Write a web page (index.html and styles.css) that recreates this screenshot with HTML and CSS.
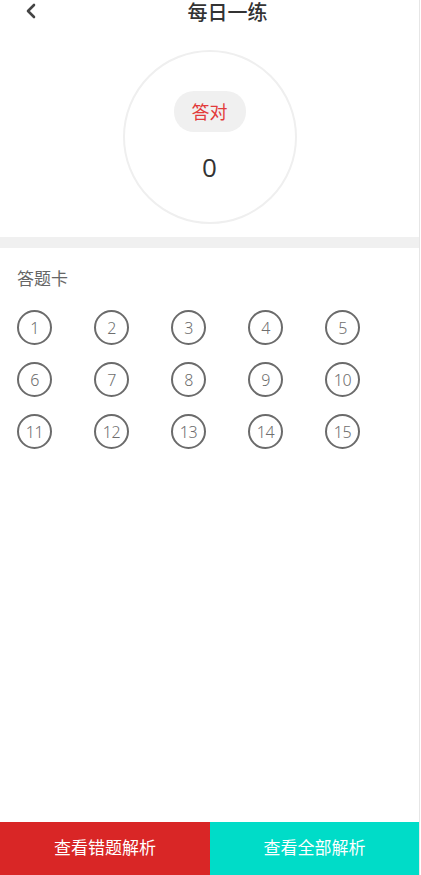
FILE: index.html
```html
<!DOCTYPE html>
<html lang="zh">
<head>
<meta charset="utf-8">
<link rel="stylesheet" href="styles.css">
</head>
<body>
<div class="page">
  <header class="topbar">
    <svg class="back" width="12" height="16" viewBox="0 0 12 16"><path d="M9 2 L3 8 L9 14" fill="none" stroke="#444" stroke-width="2.6" stroke-linecap="round" stroke-linejoin="round"/></svg>
    <h1 class="title">每日一练</h1>
  </header>
  <section class="score">
    <div class="ring">
      <span class="pill">答对</span>
      <span class="count">0</span>
    </div>
  </section>
  <div class="divider"></div>
  <section class="card">
    <h2 class="card-title">答题卡</h2>
    <div class="grid">
      <span class="num">1</span><span class="num">2</span><span class="num">3</span><span class="num">4</span><span class="num">5</span>
      <span class="num">6</span><span class="num">7</span><span class="num">8</span><span class="num">9</span><span class="num">10</span>
      <span class="num">11</span><span class="num">12</span><span class="num">13</span><span class="num">14</span><span class="num">15</span>
    </div>
  </section>
  <footer class="actions">
    <button class="btn btn-wrong">查看错题解析</button>
    <button class="btn btn-all">查看全部解析</button>
  </footer>
</div>
</body>
</html>
```

FILE: styles.css
```css
html, body {
  margin: 0;
  padding: 0;
  background: #fff;
}
body {
  font-family: "Noto Sans CJK SC", "Noto Sans", sans-serif;
}
.page {
  width: 419px;
  height: 875px;
  border-right: 1px solid #e6e6e6;
  display: flex;
  flex-direction: column;
  background: #fff;
}
.topbar {
  height: 24px;
  position: relative;
  display: flex;
  justify-content: center;
}
.back {
  position: absolute;
  left: 25px;
  top: 3px;
}
.title {
  margin: 0 0 0 36px;
  font-size: 20px;
  font-weight: 500;
  color: #333;
  line-height: 23px;
}
.score {
  height: 213px;
  display: flex;
  justify-content: center;
  padding-top: 26px;
  box-sizing: border-box;
}
.ring {
  width: 174px;
  height: 174px;
  box-sizing: border-box;
  border: 2px solid #efefef;
  border-radius: 50%;
  display: flex;
  flex-direction: column;
  align-items: center;
  padding-top: 39px;
}
.pill {
  width: 72px;
  height: 41px;
  border-radius: 20px;
  background: #f0f0f0;
  color: #e23a3a;
  font-size: 18px;
  line-height: 41px;
  text-align: center;
}
.count {
  margin-top: 20px;
  font-size: 26px;
  line-height: 30px;
  color: #333;
  font-family: "Open Sans", "Noto Sans", sans-serif;
}
.divider {
  height: 11px;
  background: #f0f0f0;
}
.card {
  flex: 1;
  padding: 17px 0 0 17px;
}
.card-title {
  margin: 0;
  font-size: 17px;
  font-weight: 400;
  color: #666;
  line-height: 26px;
}
.grid {
  margin-top: 19px;
  display: grid;
  grid-template-columns: repeat(5, 35px);
  column-gap: 42px;
  row-gap: 17px;
}
.num {
  width: 35px;
  height: 35px;
  box-sizing: border-box;
  border: 2px solid #6b6b6b;
  border-radius: 50%;
  display: flex;
  align-items: center;
  justify-content: center;
  font-family: "Noto Sans", sans-serif;
  font-size: 16px;
  font-weight: 300;
  color: #6e6e6e;
  letter-spacing: -0.5px;
}
.actions {
  height: 53px;
  display: flex;
}
.btn {
  flex: 1;
  border: none;
  margin: 0;
  padding: 0 0 4px;
  color: #fff;
  font-family: "Noto Sans CJK SC", "Noto Sans", sans-serif;
  font-size: 17px;
}
.btn-wrong {
  background: #d92626;
  flex: 0 0 210px;
}
.btn-all {
  background: #00dcc8;
}
```
